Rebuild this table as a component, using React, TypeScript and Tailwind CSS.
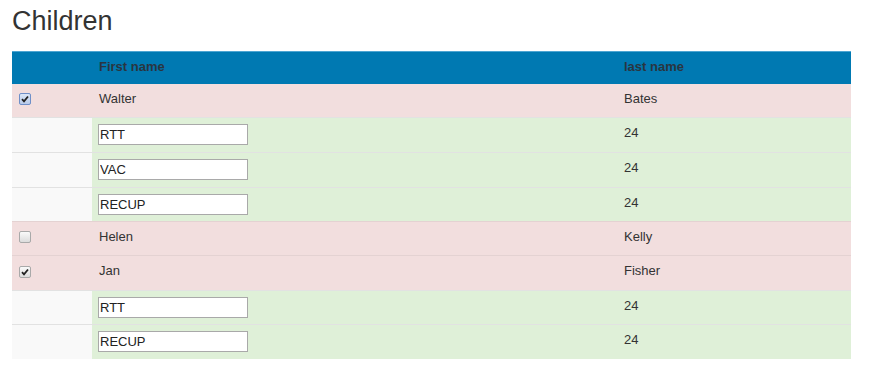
import React from 'react';

type Row =
  | { kind: 'person'; first: string; last: string; checked: boolean; focused?: boolean; h: string }
  | { kind: 'code'; code: string; value: string; h: string };

const rows: Row[] = [
  { kind: 'person', first: 'Walter', last: 'Bates', checked: true, focused: true, h: 'h-[34px]' },
  { kind: 'code', code: 'RTT', value: '24', h: 'h-[35px]' },
  { kind: 'code', code: 'VAC', value: '24', h: 'h-[35px]' },
  { kind: 'code', code: 'RECUP', value: '24', h: 'h-[34px]' },
  { kind: 'person', first: 'Helen', last: 'Kelly', checked: false, h: 'h-[34px]' },
  { kind: 'person', first: 'Jan', last: 'Fisher', checked: true, h: 'h-[35px]' },
  { kind: 'code', code: 'RTT', value: '24', h: 'h-[34px]' },
  { kind: 'code', code: 'RECUP', value: '24', h: 'h-[34px]' },
];

function Check({ checked, focused }: { checked: boolean; focused?: boolean }) {
  return (
    <span
      className={
        'inline-flex items-center justify-center w-[12px] h-[12px] rounded-[2px] border align-middle ' +
        (focused
          ? 'border-[#6f8fc8] bg-gradient-to-b from-[#dbe6f7] to-[#b9cbea]'
          : 'border-[#a9a9a9] bg-gradient-to-b from-[#fafafa] to-[#dcdcdc]')
      }
    >
      {checked && (
        <svg width="8" height="8" viewBox="0 0 8 8">
          <path d="M1 4.2 L3 6.3 L7 1.5" fill="none" stroke="#222" strokeWidth="1.8" />
        </svg>
      )}
    </span>
  );
}

export default function App() {
  return (
    <div className="bg-white w-[875px] h-[371px] px-[12px] pt-[6px] text-[#333] font-['Liberation_Sans',Arial,sans-serif]">
      <h2 className="text-[27px] leading-[30px] font-normal">Children</h2>
      <table className="mt-[15px] w-[839px] table-fixed border-collapse text-[13px]">
        <colgroup>
          <col className="w-[80px]" />
          <col className="w-[524px]" />
          <col className="w-[235px]" />
        </colgroup>
        <thead>
          <tr className="h-[32px] bg-[#0079b2] border-t border-[#4ea5d2]">
            <th></th>
            <th className="text-left font-bold px-[7px] pb-[3px] text-[#2a3540]">First name</th>
            <th className="text-left font-bold px-[8px] pb-[3px] text-[#2a3540]">last name</th>
          </tr>
        </thead>
        <tbody>
          {rows.map((r, i) =>
            r.kind === 'person' ? (
              <tr key={i} className={`${r.h} bg-[#f2dede] ${i > 0 ? 'border-t border-[#e4d2d2]' : ''}`}>
                <td className="pl-[7px] pb-[4px]">
                  <Check checked={r.checked} focused={r.focused} />
                </td>
                <td className="px-[7px] pb-[4px]">{r.first}</td>
                <td className="px-[8px] pb-[4px]">{r.last}</td>
              </tr>
            ) : (
              <tr key={i} className={`${r.h} border-t border-[#e2e2e2]`}>
                <td className="bg-[#f9f9f9]"></td>
                <td className="bg-[#dff0d8] pl-[6px] align-top pt-[6px]">
                  <input
                    readOnly
                    value={r.code}
                    className="w-[150px] h-[21px] border border-[#a9a9a9] bg-white px-[1px] text-[13px] text-[#222] outline-none"
                  />
                </td>
                <td className="bg-[#dff0d8] px-[8px] align-top pt-[5px]">{r.value}</td>
              </tr>
            )
          )}
        </tbody>
      </table>
    </div>
  );
}
